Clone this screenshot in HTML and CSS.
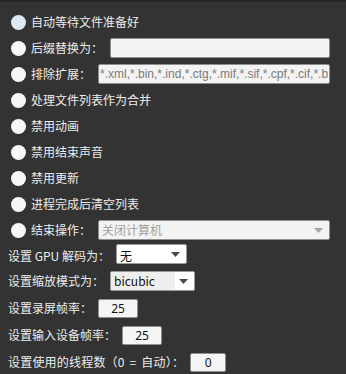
FILE: index.html
```html
<!DOCTYPE html>
<html lang="zh-CN">
<head>
  <meta charset="UTF-8">
  <title>设置</title>
  <link rel="stylesheet" href="styles.css">
</head>
<body>

  <div class="panel">
    <div class="opcion">
      <span class="radio activo"></span>
      <span class="texto">自动等待文件准备好</span>
    </div>
    <div class="opcion">
      <span class="radio"></span>
      <span class="texto etiqueta">后缀替换为：</span>
      <input class="campo" type="text">
    </div>
    <div class="opcion">
      <span class="radio"></span>
      <span class="texto etiqueta">排除扩展：</span>
      <input class="campo" type="text" placeholder="*.xml,*.bin,*.ind,*.ctg,*.mif,*.sif,*.cpf,*.cif,*.bdm,*.bdmv">
    </div>
    <div class="opcion">
      <span class="radio"></span>
      <span class="texto">处理文件列表作为合并</span>
    </div>
    <div class="opcion">
      <span class="radio"></span>
      <span class="texto">禁用动画</span>
    </div>
    <div class="opcion">
      <span class="radio"></span>
      <span class="texto">禁用结束声音</span>
    </div>
    <div class="opcion">
      <span class="radio"></span>
      <span class="texto">禁用更新</span>
    </div>
    <div class="opcion">
      <span class="radio"></span>
      <span class="texto">进程完成后清空列表</span>
    </div>
    <div class="opcion">
      <span class="radio"></span>
      <span class="texto etiqueta">结束操作：</span>
      <div class="combo deshabilitado">
        <span class="combo-texto">关闭计算机</span>
        <span class="combo-boton">
          <svg width="9" height="5" viewBox="0 0 9 5"><polygon points="0,0 9,0 4.5,5"/></svg>
        </span>
      </div>
    </div>

    <div class="ajustes">
      <div class="ajuste bajo">
        <span class="texto etiqueta">设置 GPU 解码为：</span>
        <div class="combo gpu">
          <span class="combo-texto">无</span>
          <span class="combo-boton">
            <svg width="9" height="5" viewBox="0 0 9 5"><polygon points="0,0 9,0 4.5,5"/></svg>
          </span>
        </div>
      </div>
      <div class="ajuste">
        <span class="texto etiqueta">设置缩放模式为：</span>
        <div class="combo escala">
          <span class="combo-texto">bicubic</span>
          <span class="combo-boton">
            <svg width="9" height="5" viewBox="0 0 9 5"><polygon points="0,0 9,0 4.5,5"/></svg>
          </span>
        </div>
      </div>
      <div class="ajuste">
        <span class="texto etiqueta">设置录屏帧率：</span>
        <input class="numero" type="text" value="25">
      </div>
      <div class="ajuste">
        <span class="texto etiqueta">设置输入设备帧率：</span>
        <input class="numero" type="text" value="25">
      </div>
      <div class="ajuste">
        <span class="texto etiqueta ancho">设置使用的线程数（0 = 自动）：</span>
        <input class="numero estrecho" type="text" value="0">
      </div>
    </div>
  </div>

</body>
</html>
```

FILE: styles.css
```css
body {
  margin: 0;
  background-color: #333333;
  font-family: 'Noto Sans CJK SC', 'Noto Sans', sans-serif;
  font-size: 12px;
  color: #ededed;
  overflow: hidden;
}

.panel {
  border-top: 2px solid #262626;
  padding: 7px 16px 0 9px;
  display: flex;
  flex-direction: column;
}

.opcion {
  display: flex;
  align-items: center;
  height: 26px;
}

.radio {
  width: 15px;
  height: 15px;
  border-radius: 50%;
  background-color: #f7f7f7;
  margin-left: 2px;
  margin-right: 5px;
  flex-shrink: 0;
}

.radio.activo {
  background-color: #dce9f5;
}

.texto {
  white-space: nowrap;
  line-height: 16px;
}

.opcion .etiqueta {
  margin-right: 7px;
}

.campo {
  flex: 1;
  min-width: 0;
  height: 20px;
  box-sizing: border-box;
  border: 1px solid #8f8f8f;
  border-radius: 2px;
  background-color: #f3f3f3;
  padding: 0 1px;
  font-family: 'Liberation Sans', Arial, sans-serif;
  font-size: 12px;
  color: #222;
  outline: none;
}

.campo::placeholder {
  color: #7a7a7a;
}

.combo {
  display: flex;
  height: 20px;
  box-sizing: border-box;
  border: 1px solid #9a9a9a;
  border-radius: 2px;
  background-color: #ffffff;
  overflow: hidden;
  color: #111;
}

.combo-texto {
  flex: 1;
  padding-left: 3px;
  line-height: 18px;
  white-space: nowrap;
}

.combo-boton {
  width: 19px;
  display: flex;
  align-items: center;
  justify-content: center;
}

.combo-boton svg {
  fill: #4a4a4a;
  margin-right: 2px;
}

.combo.deshabilitado {
  flex: 1;
  background-color: #f3f3f3;
  border-color: #8f8f8f;
  color: #a0a0a0;
}

.combo.deshabilitado .combo-boton svg {
  fill: #a3a3a3;
}

.combo.gpu {
  width: 71px;
}

.combo.escala {
  width: 85px;
}

.combo.escala .combo-texto {
  background-color: #efefef;
}

.ajustes {
  display: flex;
  flex-direction: column;
  gap: 5px;
  margin-left: -1px;
}

.ajuste {
  display: flex;
  align-items: center;
  height: 22px;
}

.ajuste .etiqueta {
  margin-right: 6px;
}

.ajuste.bajo .texto {
  padding-top: 4px;
}

.ajuste.bajo .combo-texto {
  padding-top: 3px;
  line-height: 15px;
}

.ajuste .ancho {
  word-spacing: 2px;
  letter-spacing: 0.2px;
}

.numero {
  width: 40px;
  height: 19px;
  box-sizing: border-box;
  border: 1px solid #8f8f8f;
  border-radius: 2px;
  background-color: #f5f5f5;
  text-align: center;
  font-family: 'Noto Sans', sans-serif;
  font-size: 12px;
  color: #111;
  padding: 0;
  outline: none;
}

.numero.estrecho {
  width: 36px;
}
```
